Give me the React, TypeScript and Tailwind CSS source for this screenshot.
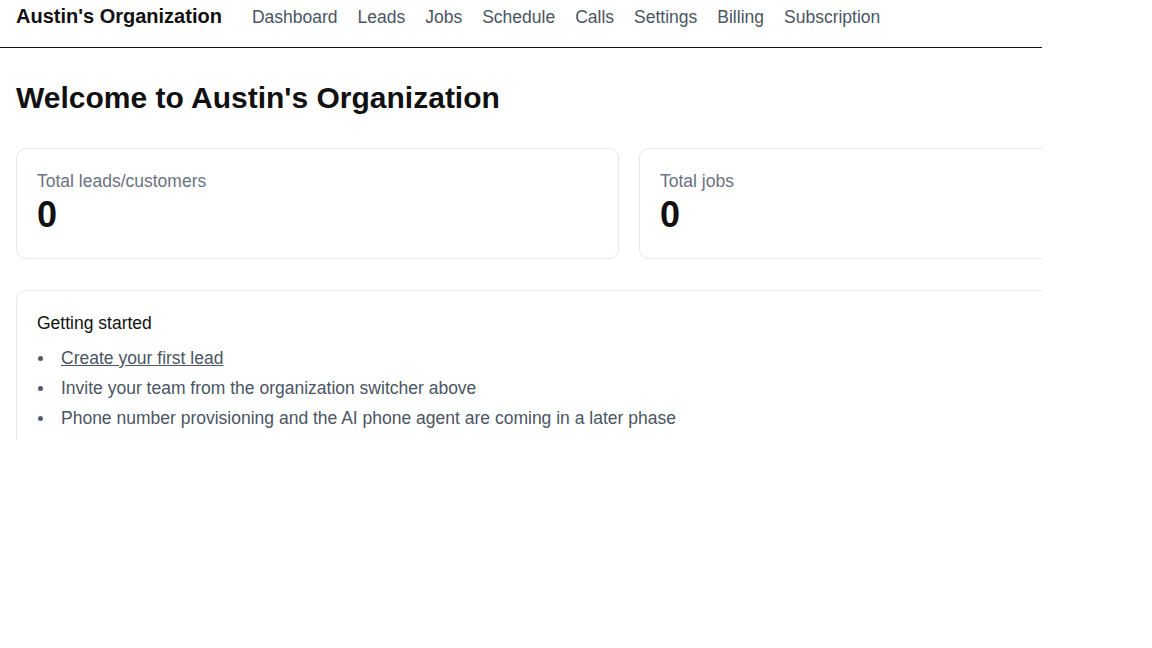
import React from "react";

const navLinks = ["Dashboard", "Leads", "Jobs", "Schedule", "Calls", "Settings", "Billing", "Subscription"];

const stats = [
  { label: "Total leads/customers", value: 0 },
  { label: "Total jobs", value: 0 },
];

const steps = [
  { text: "Create your first lead", link: true },
  { text: "Invite your team from the organization switcher above" },
  { text: "Phone number provisioning and the AI phone agent are coming in a later phase" },
];

export default function App() {
  return (
    <div className="min-h-screen bg-white" style={{ fontFamily: '"Liberation Sans", Arial, sans-serif' }}>
      <div className="w-[1042px] h-[440px] overflow-hidden">
        <header className="flex items-start h-[48px] px-4 pt-[2px] border-b border-[#111111]">
          <span className="text-[20px] leading-[28px] font-bold text-[#111111] whitespace-nowrap">Austin's Organization</span>
          <nav className="flex gap-5 ml-[30px] pt-[1px]">
            {navLinks.map((link) => (
              <a key={link} href="#" className="text-[17.5px] leading-[28px] text-[#4b5563] whitespace-nowrap">
                {link}
              </a>
            ))}
          </nav>
        </header>

        <main className="px-4 pt-[32px]">
          <h1 className="text-[30px] leading-[36px] font-bold text-[#111111] whitespace-nowrap">
            Welcome to Austin's Organization
          </h1>

          <div className="grid grid-cols-[603px_603px] gap-5 mt-[32px] w-max">
            {stats.map((stat) => (
              <div key={stat.label} className="border border-[#e5e7eb] rounded-[10px] px-5 pt-[22px] pb-[19px]">
                <div className="text-[17.5px] leading-[20px] text-[#6b7280] whitespace-nowrap">{stat.label}</div>
                <div className="text-[36px] leading-[48px] h-[48px] font-bold text-[#111111]">{stat.value}</div>
              </div>
            ))}
          </div>

          <div className="mt-[31px] w-[1226px] border border-[#e5e7eb] rounded-[10px] px-5 pt-[21px] pb-5">
            <h2 className="text-[17.5px] leading-[22px] text-[#111111]">Getting started</h2>
            <ul className="mt-[9px] text-[17.5px] leading-[30px] text-[#4b5563]">
              {steps.map((step) => (
                <li key={step.text} className="flex items-center">
                  <span className="w-[24px] shrink-0 flex">
                    <span className="ml-[1px] w-[5px] h-[5px] rounded-full bg-[#555b66]" />
                  </span>
                  {step.link ? (
                    <a href="#" className="underline">{step.text}</a>
                  ) : (
                    <span>{step.text}</span>
                  )}
                </li>
              ))}
            </ul>
          </div>
        </main>
      </div>
    </div>
  );
}
